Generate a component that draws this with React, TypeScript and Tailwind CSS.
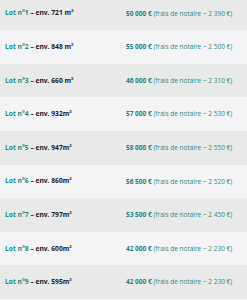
import React from "react";

const lots = [
  { n: 1, area: "721 m²", price: "50 000 €", fees: "2 390 €" },
  { n: 2, area: "848 m²", price: "55 000 €", fees: "2 500 €" },
  { n: 3, area: "660 m²", price: "46 000 €", fees: "2 310 €" },
  { n: 4, area: "932m²", price: "57 000 €", fees: "2 530 €" },
  { n: 5, area: "947m²", price: "58 000 €", fees: "2 550 €" },
  { n: 6, area: "860m²", price: "56 500 €", fees: "2 520 €" },
  { n: 7, area: "797m²", price: "53 500 €", fees: "2 450 €" },
  { n: 8, area: "600m²", price: "42 000 €", fees: "2 230 €" },
  { n: 9, area: "595m²", price: "42 000 €", fees: "2 230 €" },
];

export default function App() {
  return (
    <div
      className="w-[247px] h-[300px] overflow-hidden bg-[#f4f4f6] text-[6.7px]"
      style={{ fontFamily: '"Open Sans", sans-serif' }}
    >
      <div className="flex flex-col -mt-[3.4px]">
        {lots.map((l, i) => (
          <div
            key={l.n}
            className={
              "flex items-center h-[33.6px] shrink-0 " +
              (i % 2 === 0 ? "bg-[#e8e9e9]" : "bg-[#f4f4f6]")
            }
          >
            <div className="w-[126px] pl-[5px] font-bold whitespace-nowrap">
              <span className="text-[#1b8c78]">Lot n°{l.n}</span>
              <span className="text-[#1a1a1a]"> – env. {l.area}</span>
            </div>
            <div className="whitespace-nowrap text-[6.5px]">
              <span className="font-bold text-[#1f7f80]">{l.price}</span>
              <span className="text-[#2c8a80]"> (frais de notaire ~ {l.fees})</span>
            </div>
          </div>
        ))}
      </div>
    </div>
  );
}
